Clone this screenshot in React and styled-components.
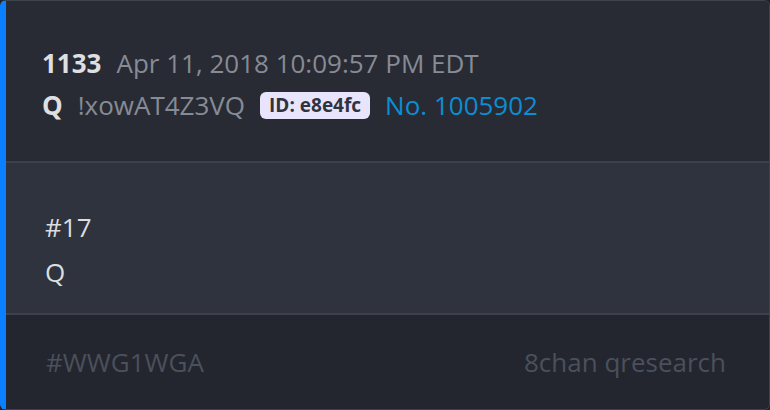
import React from 'react';
import styled, {createGlobalStyle} from "styled-components";

const GlobalStyle = createGlobalStyle`
  html, body {
    margin: 0;
    padding: 0;
    background: #1f2228;
  }
  body {
    font-family: "Open Sans", "Noto Sans", sans-serif;
  }
`;

function App() {
    return (
        <>
            <GlobalStyle/>
            <Card>
                <Header>
                    <Row>
                        <Strong>1133</Strong>
                        <Muted>Apr 11, 2018 10:09:57 PM EDT</Muted>
                    </Row>
                    <Row>
                        <Strong>Q</Strong>
                        <Muted>!xowAT4Z3VQ</Muted>
                        <Badge>ID: e8e4fc</Badge>
                        <PostLink href="#">No. 1005902</PostLink>
                    </Row>
                </Header>
                <Body>
                    <Line>#17</Line>
                    <Line>Q</Line>
                </Body>
                <Footer>
                    <FooterText>#WWG1WGA</FooterText>
                    <FooterText>8chan qresearch</FooterText>
                </Footer>
            </Card>
        </>
    );
}

export default App;

const Card = styled.div`
  width: 770px;
  height: 410px;
  box-sizing: border-box;
  display: flex;
  flex-direction: column;
  border: 1px solid #3d424c;
  border-left: 6px solid #0a80ff;
  border-radius: 6px;
  overflow: hidden;
  background: #23262e;
`;

const Header = styled.div`
  background: #282b34;
  padding: 41px 40px 35px 36px;
  border-bottom: 2px solid #3b404a;
`;

const Row = styled.div`
  display: flex;
  align-items: center;
  gap: 15px;
  height: 42px;
  font-size: 26px;
`;

const Strong = styled.span`
  font-weight: 700;
  color: #dedfe1;
`;

const Muted = styled.span`
  color: #878b95;
`;

const Badge = styled.span`
  background: #e8e4fc;
  color: #2f3340;
  font-size: 19px;
  font-weight: 700;
  padding: 1px 9px 2px;
  border-radius: 6px;
  line-height: 24px;
`;

const PostLink = styled.a`
  color: #0b8ed3;
  text-decoration: none;
`;

const Body = styled.div`
  background: #2e333d;
  padding: 42px 40px 18px 39px;
  border-bottom: 2px solid #3c414b;
`;

const Line = styled.div`
  font-size: 26px;
  line-height: 45px;
  color: #dcdddf;
`;

const Footer = styled.div`
  flex: 1;
  display: flex;
  justify-content: space-between;
  align-items: center;
  padding: 0 43px 0 40px;
  background: #23262e;
`;

const FooterText = styled.span`
  font-size: 26px;
  color: #4b505b;
`;
